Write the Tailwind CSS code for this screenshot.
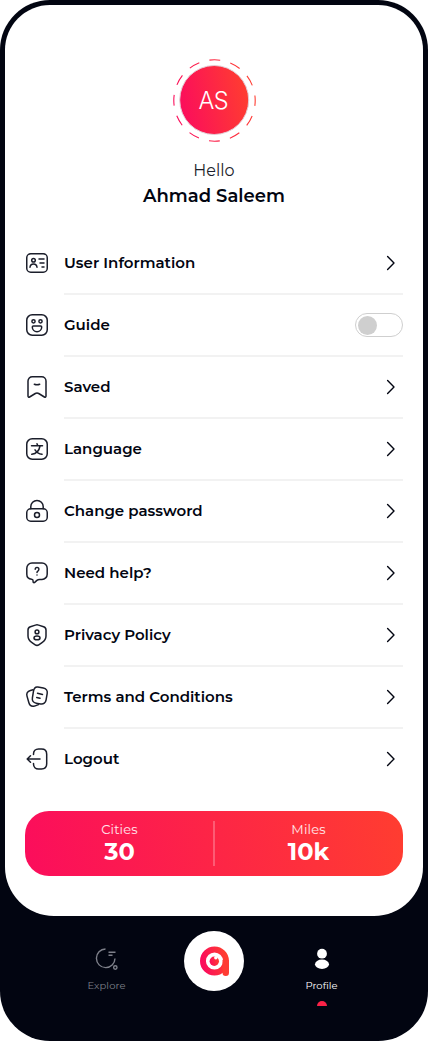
<!DOCTYPE html>
<html lang="en">
<head>
<meta charset="utf-8">
<meta name="viewport" content="width=device-width, initial-scale=1">
<title>Profile</title>
<script src="https://cdn.jsdelivr.net/npm/@tailwindcss/browser@4"></script>
</head>
<body class="bg-white font-['Montserrat','Inter',sans-serif] text-[#020511]">
<svg class="absolute size-0" aria-hidden="true"><defs>
  <linearGradient id="brand" x1="0" x2="1" y1="0.6" y2="0.4"><stop stop-color="#fb0d5c"/><stop offset="1" stop-color="#ff3d30"/></linearGradient>
  <symbol id="chev" viewBox="0 0 24 24"><path d="M8.600 5.600 15 12l-6.400 6.400" fill="none" stroke="currentColor" stroke-width="1.4" stroke-linecap="round" stroke-linejoin="round"/></symbol>
</defs></svg>
<div class="w-[428px] h-[1041px] bg-[#020511] rounded-[50px] p-[5px] flex flex-col overflow-hidden">
  <main class="h-[911px] shrink-0 bg-white rounded-t-[45px] rounded-b-[49px] px-5 flex flex-col">
    <header class="h-[228px] shrink-0 flex flex-col items-center pt-[53px]">
      <svg class="size-[84px] shrink-0" viewBox="0 0 84 84">
        <circle cx="42.500" cy="42.500" r="40.700" fill="none" stroke="url(#brand)" stroke-width="1.1" stroke-dasharray="10.9 10.41" stroke-dashoffset="5.45"/>
        <circle cx="42.200" cy="42" r="34.500" fill="url(#brand)" stroke="#e2cfd6" stroke-width="1"/>
        <text x="41.500" y="50.500" text-anchor="middle" textLength="30" font-family="Inter" font-weight="300" font-size="23.500" fill="#fff">AS</text>
      </svg>
      <p class="mt-[19px] text-[16px] leading-5 font-normal text-[#1b1e2b]">Hello</p>
      <h1 class="mt-[3px] text-[18px] leading-6 font-semibold">Ahmad Saleem</h1>
    </header>

    <ul class="text-[15px] font-semibold flex flex-col">
      <li class="flex h-[62px]">
        <span class="w-[39px] h-[60px] flex items-center"><svg class="size-6" viewBox="0 0 24 24" fill="none" stroke="#1b1e2b" stroke-width="1.5" stroke-linecap="round" stroke-linejoin="round"><rect x="1.75" y="2.75" width="20.5" height="18.5" rx="4"/><circle cx="8.5" cy="9.3" r="1.8"/><path d="M5 16.2c.2-2.1 1.5-3.3 3.5-3.3s3.300 1.200 3.500 3.300M14 8h5M15 12h4M17 16h2"/></svg></span>
        <span class="flex-1 flex items-center justify-between border-b-2 border-[#f2f2f2]"><span>User Information</span><svg class="size-6"><use href="#chev"/></svg></span>
      </li>
      <li class="flex h-[62px]">
        <span class="w-[39px] h-[60px] flex items-center"><svg class="size-6" viewBox="0 0 24 24" fill="none" stroke="#1b1e2b" stroke-width="1.5" stroke-linecap="round" stroke-linejoin="round"><rect x="1.75" y="1.75" width="20.5" height="20.5" rx="5.5"/><circle cx="8.5" cy="8.3" r="1.6"/><circle cx="15.500" cy="8.300" r="1.600"/><path d="M8.300 13h7.400a1 1 0 0 1 1 1 4.700 4.700 0 0 1-9.400 0 1 1 0 0 1 1-1z"/></svg></span>
        <span class="flex-1 flex items-center justify-between border-b-2 border-[#f2f2f2]"><span>Guide</span><span class="w-12 h-6 rounded-full border border-[#cfcfcf] flex items-center pl-[2px]"><span class="size-[19px] rounded-full bg-[#cfcfcf]"></span></span></span>
      </li>
      <li class="flex h-[62px]">
        <span class="w-[39px] h-[60px] flex items-center"><svg class="size-6" viewBox="0 0 24 24" fill="none" stroke="#1b1e2b" stroke-width="1.5" stroke-linecap="round" stroke-linejoin="round"><path d="M3 6a4.300 4.300 0 0 1 4.300-4.300h9.400A4.300 4.300 0 0 1 21 6v15c0 1-.8 1.500-1.600 1l-5.700-3.500a3.200 3.200 0 0 0-3.400 0L4.600 22c-.8.500-1.600 0-1.600-1zM9.300 9.200c1.700.6 3.700.6 5.400 0"/></svg></span>
        <span class="flex-1 flex items-center justify-between border-b-2 border-[#f2f2f2]"><span>Saved</span><svg class="size-6"><use href="#chev"/></svg></span>
      </li>
      <li class="flex h-[62px]">
        <span class="w-[39px] h-[60px] flex items-center"><svg class="size-6" viewBox="0 0 24 24" fill="none" stroke="#1b1e2b" stroke-width="1.5" stroke-linecap="round" stroke-linejoin="round"><rect x="1.750" y="1.750" width="20.500" height="20.500" rx="5.500"/><path d="M6.500 8.700h11M12 6.800l.7 1.800M15 9c-.8 4.600-3.800 7.700-8.200 8.300M10 12.800c1.500 2.400 3.800 4 7 4.500"/></svg></span>
        <span class="flex-1 flex items-center justify-between border-b-2 border-[#f2f2f2]"><span>Language</span><svg class="size-6"><use href="#chev"/></svg></span>
      </li>
      <li class="flex h-[62px]">
        <span class="w-[39px] h-[60px] flex items-center"><svg class="size-6" viewBox="0 0 24 24" fill="none" stroke="#1b1e2b" stroke-width="1.5" stroke-linecap="round" stroke-linejoin="round"><rect x="1.750" y="9.800" width="20.500" height="12.400" rx="4"/><path d="M5.800 9.800V7.600a6.200 6.200 0 0 1 12.400 0v2.200"/><circle cx="12" cy="16" r="2.500"/></svg></span>
        <span class="flex-1 flex items-center justify-between border-b-2 border-[#f2f2f2]"><span>Change password</span><svg class="size-6"><use href="#chev"/></svg></span>
      </li>
      <li class="flex h-[62px]">
        <span class="w-[39px] h-[60px] flex items-center"><svg class="size-6" viewBox="0 0 24 24" fill="none" stroke="#1b1e2b" stroke-width="1.5" stroke-linecap="round" stroke-linejoin="round"><path d="M7 2h10a5.200 5.200 0 0 1 5.200 5.200v6a5.200 5.200 0 0 1-5.200 5.200h-2.500c-1 0-1.900.4-2.600 1l-2.200 2c-.7.600-1.600.2-1.600-.7v-.8c0-.9-.5-1.500-1.400-1.600-2.900-.4-4.900-2.300-4.900-5.100v-6A5.200 5.200 0 0 1 7 2z"/><path d="M10.200 8.300a1.850 1.850 0 1 1 2.900 1.500c-.8.500-1.100.9-1.100 1.600M12 14v.1"/></svg></span>
        <span class="flex-1 flex items-center justify-between border-b-2 border-[#f2f2f2]"><span>Need help?</span><svg class="size-6"><use href="#chev"/></svg></span>
      </li>
      <li class="flex h-[62px]">
        <span class="w-[39px] h-[60px] flex items-center"><svg class="size-6" viewBox="0 0 24 24" fill="none" stroke="#1b1e2b" stroke-width="1.5" stroke-linecap="round" stroke-linejoin="round"><path d="M10.400 2.100a5 5 0 0 1 3.200 0l5 1.700A3.500 3.500 0 0 1 21 7.100V13c0 3-1.500 5-4 6.700l-3.200 2.100a3.300 3.300 0 0 1-3.600 0L7 19.700C4.500 18 3 16 3 13V7.100a3.500 3.500 0 0 1 2.400-3.300z"/><circle cx="12" cy="8.900" r="1.900"/><ellipse cx="12" cy="14.900" rx="3" ry="1.900"/></svg></span>
        <span class="flex-1 flex items-center justify-between border-b-2 border-[#f2f2f2]"><span>Privacy Policy</span><svg class="size-6"><use href="#chev"/></svg></span>
      </li>
      <li class="flex h-[62px]">
        <span class="w-[39px] h-[60px] flex items-center"><svg class="size-6" viewBox="0 0 24 24" fill="none" stroke="#1b1e2b" stroke-width="1.5" stroke-linecap="round" stroke-linejoin="round"><path d="m12.800 2.100 5.500.9c2.900.5 4.400 2.600 3.900 5.400l-1.100 6.500c-.5 3-2.600 4.500-5.500 4l-4.400-.7c-2.900-.5-4.300-2.500-3.800-5.400l1.100-6.600c.5-2.900 1.900-4.500 4.300-4.100z"/><path d="M8 4.800 5.400 5.500c-3 .8-4.200 2.800-3.400 5.600l1.900 6.700c.8 2.900 2.800 4 5.600 3.300l4-1.500M12.500 8.200l5 1.200M11.700 12.500l3.300.8"/></svg></span>
        <span class="flex-1 flex items-center justify-between border-b-2 border-[#f2f2f2]"><span>Terms and Conditions</span><svg class="size-6"><use href="#chev"/></svg></span>
      </li>
      <li class="flex h-[60px]">
        <span class="w-[39px] h-[60px] flex items-center"><svg class="size-6" viewBox="0 0 24 24" fill="none" stroke="#1b1e2b" stroke-width="1.5" stroke-linecap="round" stroke-linejoin="round"><path d="M8.500 7.500V7c0-3 2.100-5 5-5h3c3.100 0 5.200 2.100 5.200 5.200v9.600c0 3.100-2.100 5.200-5.200 5.200h-3c-2.900 0-5-2-5-5v-.5M15 12H2.300M5.500 8.700 2.200 12l3.300 3.300"/></svg></span>
        <span class="flex-1 flex items-center justify-between"><span>Logout</span><svg class="size-6"><use href="#chev"/></svg></span>
      </li>
    </ul>

    <section class="mt-[22px] h-[65px] shrink-0 rounded-[24px] bg-[linear-gradient(80deg,#fb0d5c,#ff3d30)] flex items-center text-white text-center">
      <div class="flex-1 -mt-[3px] pl-px"><p class="text-[13px] leading-[18px] tracking-[0.15px] text-white/90">Cities</p><p class="text-[24px] leading-[27px] font-bold">30</p></div>
      <div class="w-[2px] h-[45px] bg-white/25"></div>
      <div class="flex-1 -mt-[3px] pr-px"><p class="text-[13px] leading-[18px] tracking-[0.15px] text-white/90">Miles</p><p class="text-[24px] leading-[27px] font-bold">10k</p></div>
    </section>
  </main>

  <nav class="flex justify-center pt-[15px] text-[10px] leading-[14px] text-center">
    <a class="w-[155px] flex flex-col items-center pt-4 text-[#7e808a]">
      <svg class="size-6" viewBox="0 0 24 24" fill="none" stroke="currentColor" stroke-width="1.400"><path d="M10.500 2A9.300 9.300 0 1 0 20 11.500M13.500 5.200h7M13.500 8.200h4"/><circle cx="20.300" cy="20.500" r="1.700"/></svg>
      <span class="mt-[8px] tracking-[0.1px]">Explore</span>
    </a>
    <a class="w-[60px]">
      <svg class="size-[60px]" viewBox="0 0 60 60"><circle cx="30" cy="30" r="30" fill="#fff"/><circle cx="30.500" cy="30" r="11.550" fill="none" stroke="url(#brand)" stroke-width="5.900"/><path d="M38.500 29H45v12.750a3.250 3.250 0 0 1-6.500 0z" fill="#ff3b33"/><circle cx="30.300" cy="30.300" r="4.700" fill="url(#brand)"/><circle cx="31.800" cy="26.800" r="1.700" fill="#fff"/></svg>
    </a>
    <a class="w-[155px] flex flex-col items-center pt-4 text-white">
      <svg class="size-6" viewBox="0 0 24 24" fill="currentColor"><circle cx="12" cy="6.700" r="4.900"/><ellipse cx="12" cy="17.300" rx="7" ry="4.700"/></svg>
      <span class="mt-[8px]">Profile</span>
      <span class="mt-[8px] w-[10px] h-[5px] rounded-t-full bg-[#fb2247]"></span>
    </a>
  </nav>
</div>
</body>
</html>
